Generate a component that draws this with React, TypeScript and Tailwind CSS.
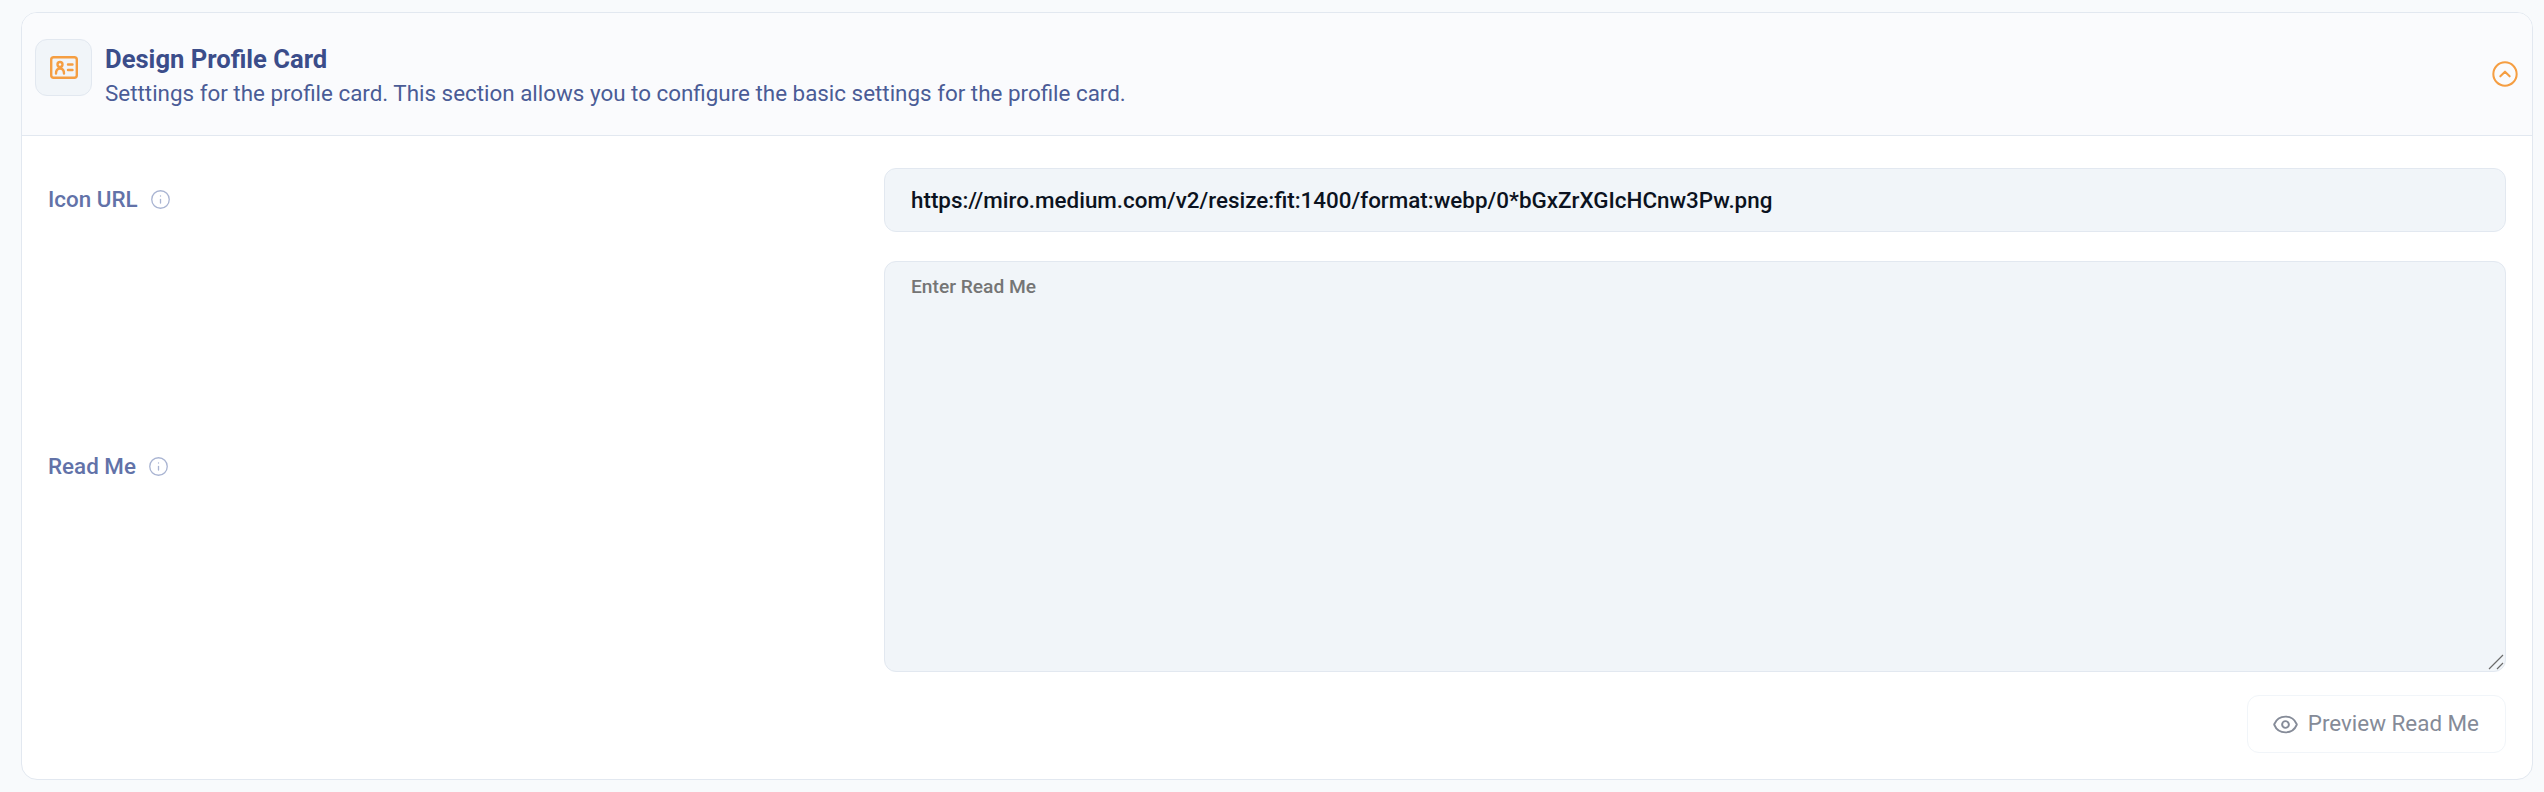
import { CircleChevronUp, Eye, Info } from "lucide-react";

function IdCardIcon() {
  return (
    <svg width="28" height="23" viewBox="0 0 28 23" fill="none" stroke="#f59e42" strokeWidth="2.400" strokeLinecap="round">
      <rect x="1.200" y="1.200" width="25.600" height="20.600" rx="2.500" />
      <circle cx="10" cy="8.500" r="2.500" />
      <path d="M6 17.500c0-3.500 1.200-5 4-5s4 1.500 4 5" />
      <path d="M18 8.500h4.500M18 14h4.500" />
    </svg>
  );
}

function FieldLabel({ text }: { text: string }) {
  return (
    <div className="flex w-[836px] shrink-0 items-center gap-3">
      <span className="text-[22.4px] font-medium text-[#6272a8]">{text}</span>
      <Info size={21} strokeWidth={1.5} className="text-[#a9b4d2]" />
    </div>
  );
}

export default function App() {
  return (
    <div className="h-[792px] bg-[#f8fafc] pt-3 pr-[11px] pl-[21px] font-['Roboto',sans-serif]">
      <div className="overflow-hidden rounded-2xl border border-[#e2e8f0] bg-white">
        {/* Header */}
        <div className="flex h-[123px] items-center justify-between border-b border-[#e2e8f0] bg-[#fafbfd] pr-[13px] pl-[13px]">
          <div className="flex items-start gap-[13px]">
            <div className="flex h-[57px] w-[57px] items-center justify-center rounded-xl border border-[#e2e8f0] bg-[#f1f5f9]">
              <IdCardIcon />
            </div>
            <div className="pt-[3px]">
              <div className="text-[25.6px] leading-[34px] font-bold text-[#3b4d8a]">Design Profile Card</div>
              <div className="text-[22.4px] leading-[34px] text-[#4a5c96]">
                Setttings for the profile card. This section allows you to configure the basic settings for the profile card.
              </div>
            </div>
          </div>
          <CircleChevronUp size={28} strokeWidth={1.75} className="text-[#f59e42]" />
        </div>

        {/* Body */}
        <div className="flex flex-col gap-[29px] pt-8 pr-[26px] pb-[26px] pl-[26px]">
          <div className="flex items-center">
            <FieldLabel text="Icon URL" />
            <input
              readOnly
              value="https://miro.medium.com/v2/resize:fit:1400/format:webp/0*bGxZrXGIcHCnw3Pw.png"
              className="h-16 w-full rounded-xl border border-[#e2e8f0] bg-[#f1f5f9] px-[26px] text-[22.4px] font-medium text-[#0b1220] outline-none"
            />
          </div>
          <div className="flex items-center">
            <FieldLabel text="Read Me" />
            <div className="relative w-full">
              <textarea
                placeholder="Enter Read Me"
                className="block h-[411px] w-full resize-none rounded-xl border border-[#e2e8f0] bg-[#f1f5f9] px-[26px] py-[11px] text-[19.2px] font-medium outline-none placeholder:text-[#757575]"
              />
              {/* resize grip */}
              <svg width="16" height="16" viewBox="0 0 16 16" className="absolute right-[2px] bottom-[2px]" stroke="#6b6b6b" strokeWidth="1.200">
                <path d="M1 15 15 1M9 15l6-6" />
              </svg>
            </div>
          </div>
          <div className="-mt-1.5 flex justify-end">
            <button className="flex h-[58px] items-center gap-[9px] rounded-xl border border-[#f1f5f9] bg-white pr-[26px] pl-6 text-[22.4px] text-[#858b98]">
              <Eye size={27} strokeWidth={1.75} />
              Preview Read Me
            </button>
          </div>
        </div>
      </div>
    </div>
  );
}
